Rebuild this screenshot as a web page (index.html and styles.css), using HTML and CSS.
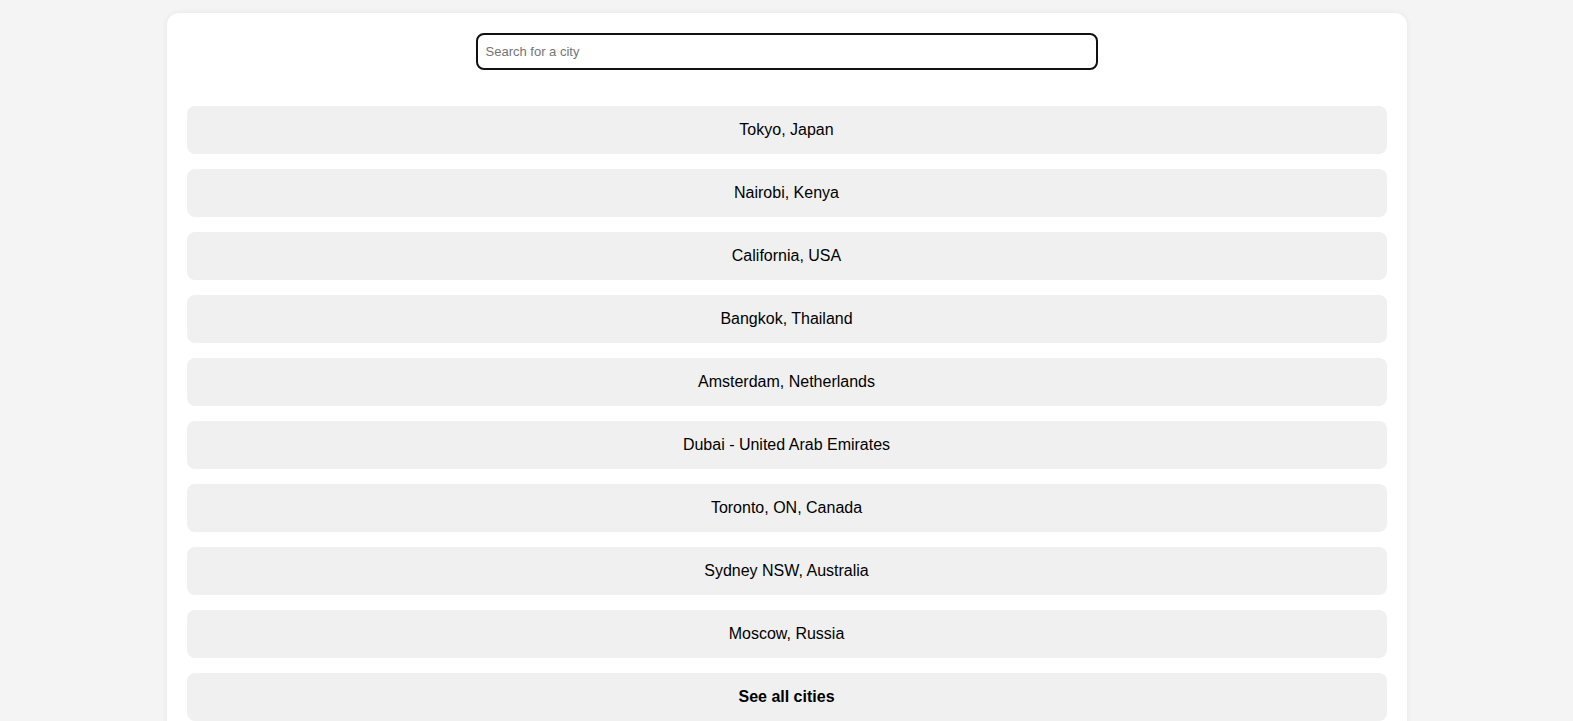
FILE: index.html
```html
<!DOCTYPE html>
<html lang="en">
<head>
<meta charset="utf-8">
<title>Cities</title>
<link rel="stylesheet" href="styles.css">
</head>
<body>
<main class="card">
  <div class="search-row">
    <input class="search" type="text" placeholder="Search for a city">
  </div>
  <ul class="cities">
    <li class="city">Tokyo, Japan</li>
    <li class="city">Nairobi, Kenya</li>
    <li class="city">California, USA</li>
    <li class="city">Bangkok, Thailand</li>
    <li class="city">Amsterdam, Netherlands</li>
    <li class="city">Dubai - United Arab Emirates</li>
    <li class="city">Toronto, ON, Canada</li>
    <li class="city">Sydney NSW, Australia</li>
    <li class="city">Moscow, Russia</li>
    <li class="city city-all">See all cities</li>
  </ul>
</main>
</body>
</html>
```

FILE: styles.css
```css
html, body {
  margin: 0;
  padding: 0;
}
body {
  background: #f4f4f4;
  font-family: "Liberation Sans", Arial, sans-serif;
  color: #000;
  padding-top: 13px;
}
.card {
  width: 1240px;
  box-sizing: border-box;
  margin: 0 auto;
  background: #fff;
  border-radius: 12px;
  box-shadow: 0 0 6px rgba(0, 0, 0, 0.06);
  padding: 20px 20px 20px;
}
.search-row {
  display: flex;
  justify-content: center;
}
.search {
  width: 622px;
  height: 37px;
  box-sizing: border-box;
  border: 2px solid #111;
  border-radius: 8px;
  padding: 0 8px;
  font-family: "Liberation Sans", Arial, sans-serif;
  font-size: 13px;
  color: #000;
  outline: none;
  background: #fff;
}
.search::placeholder {
  color: #757575;
}
.cities {
  list-style: none;
  margin: 36px 0 0;
  padding: 0;
  display: flex;
  flex-direction: column;
  gap: 15px;
}
.city {
  background: #f0f0f0;
  border-radius: 8px;
  height: 48px;
  display: flex;
  align-items: center;
  justify-content: center;
  font-size: 16px;
}
.city-all {
  font-weight: bold;
}
```
